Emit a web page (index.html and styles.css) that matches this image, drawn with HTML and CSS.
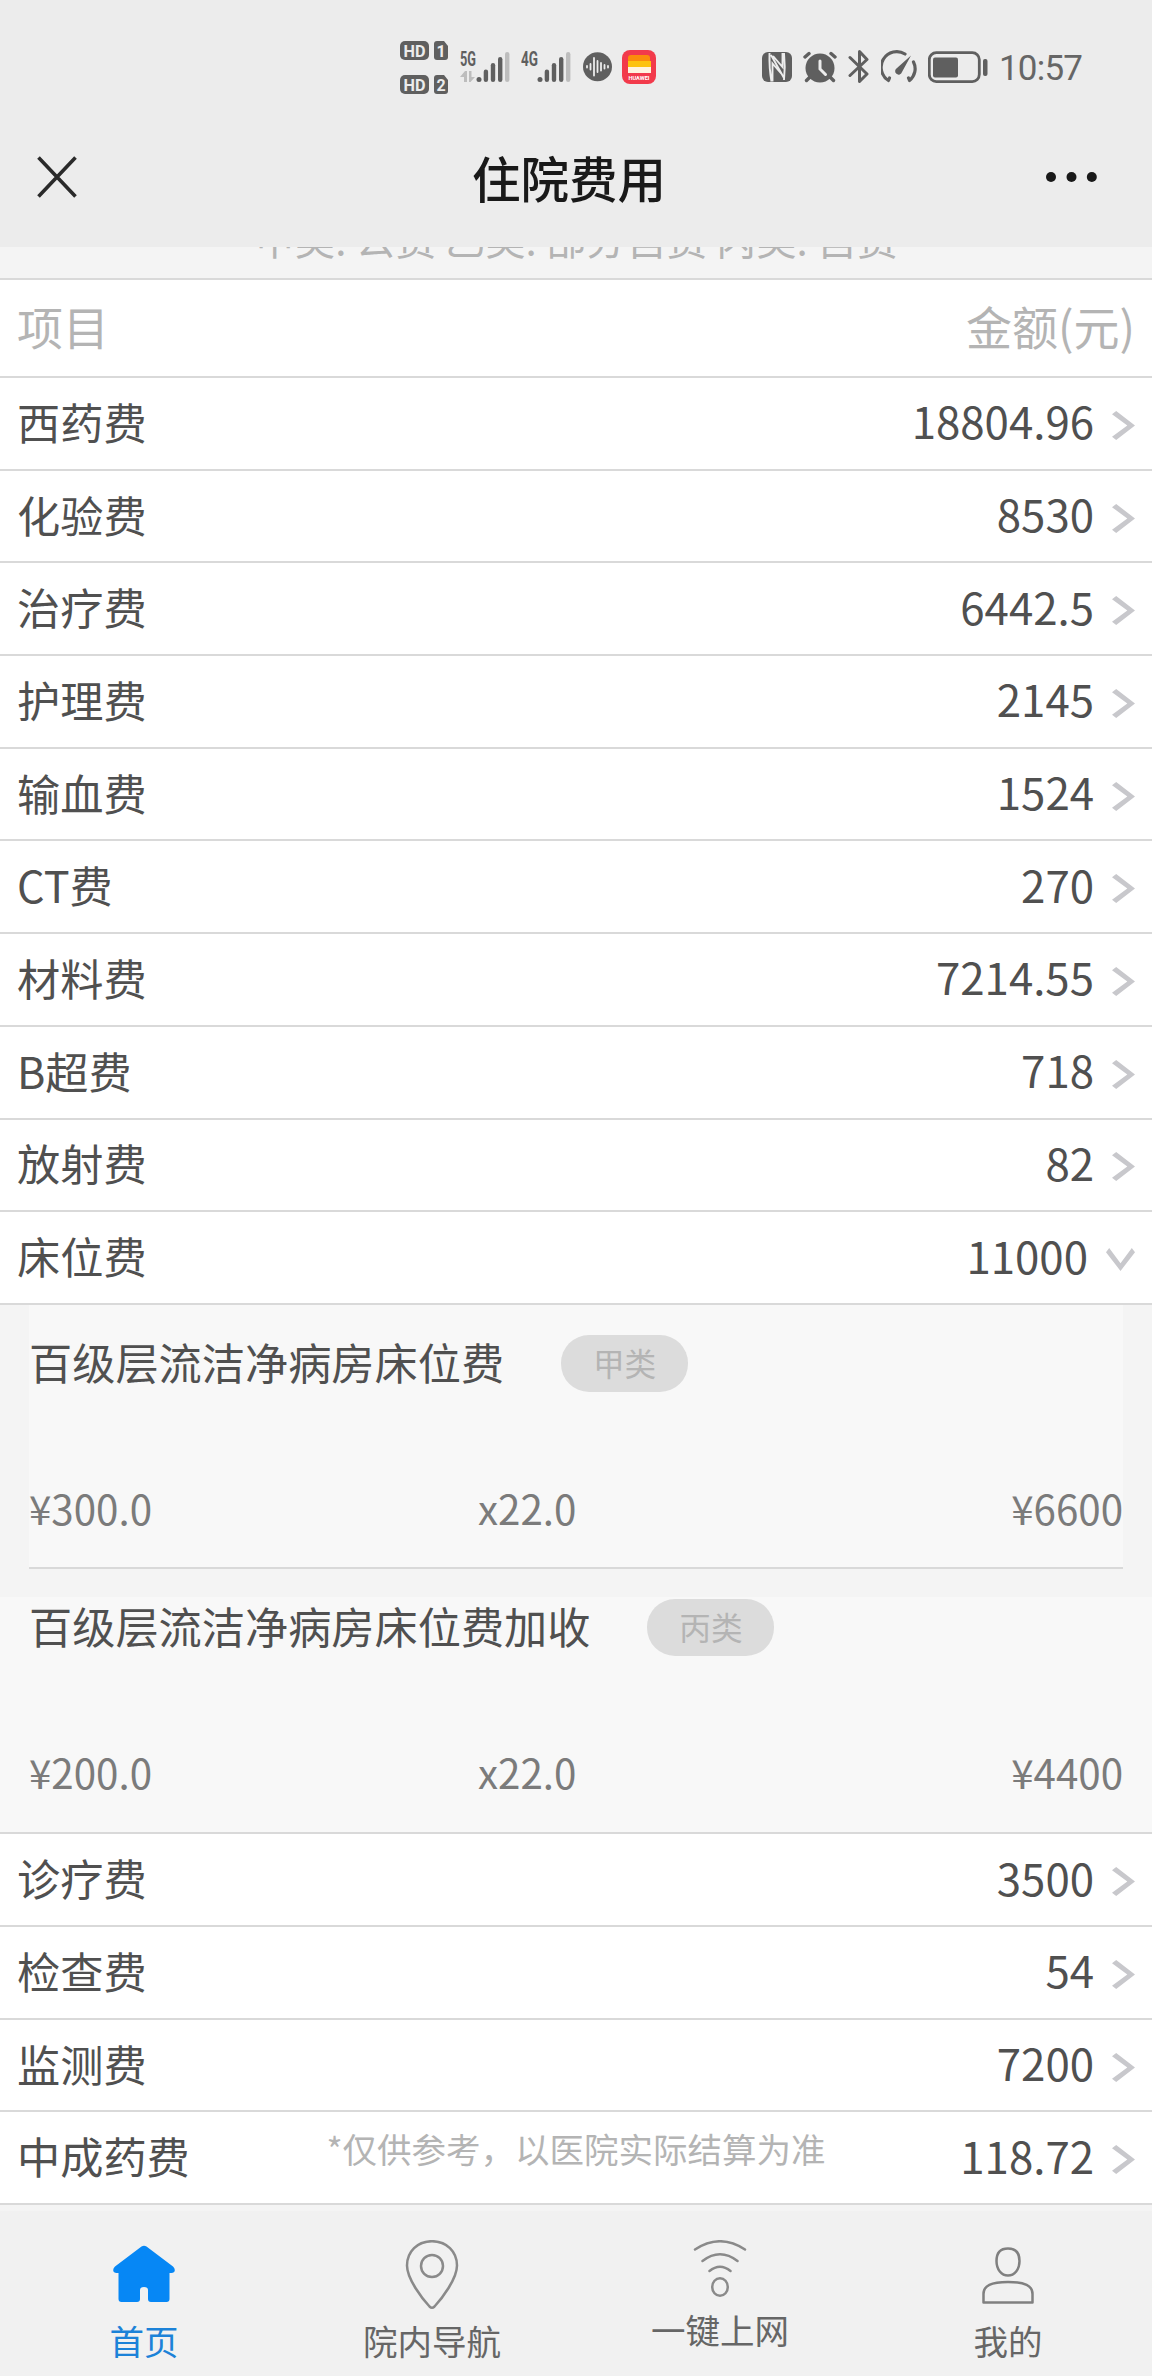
FILE: index.html
```html
<!DOCTYPE html>
<html lang="zh-CN">
<head>
    <meta charset="UTF-8">
    <meta name="viewport" content="width=device-width, initial-scale=1.0">
    <title>住院费用</title>
    <link rel="stylesheet" href="styles.css">
</head>
<body>
    <div class="page">
        <header class="top">
            <!-- 状态栏 -->
            <div class="status-bar">
                <svg class="hd-icon" width="48" height="56" viewBox="0 0 48 56">
                    <g fill="#5f5f5f">
                        <rect x="0" y="1" width="29" height="19" rx="5"/>
                        <path d="M37 1h7l4 5v11q0 3-3 3h-8q-3 0-3-3v-13q0-3 3-3z"/>
                        <rect x="0" y="35" width="29" height="19" rx="5"/>
                        <path d="M37 35h7l4 5v11q0 3-3 3h-8q-3 0-3-3v-13q0-3 3-3z"/>
                    </g>
                    <g class="badge-text">
                        <text x="14.5" y="16.5" textLength="22" lengthAdjust="spacingAndGlyphs">HD</text>
                        <text x="41" y="16.5">1</text>
                        <text x="14.5" y="50.5" textLength="22" lengthAdjust="spacingAndGlyphs">HD</text>
                        <text x="41" y="50.5">2</text>
                    </g>
                </svg>
                <svg class="signal-5g" width="50" height="56" viewBox="0 0 50 56">
                    <text class="net-text" x="0" y="25.5" textLength="16" lengthAdjust="spacingAndGlyphs">5G</text>
                    <g fill="#bdbdbd">
                        <path d="M0 37l5-6h2v11H4v-5z"/>
                        <path d="M9 31h2.500v6H15l-4.500 5H9z"/>
                        <rect x="45" y="12" width="4.400" height="30" rx="2.200"/>
                    </g>
                    <g fill="#5f5f5f">
                        <circle cx="19" cy="39.500" r="2.500"/>
                        <rect x="23.700" y="29.500" width="4.400" height="12.500" rx="2.200"/>
                        <rect x="30.800" y="23" width="4.400" height="19" rx="2.200"/>
                        <rect x="38" y="17" width="4.400" height="25" rx="2.200"/>
                    </g>
                </svg>
                <svg class="signal-4g" width="50" height="56" viewBox="0 0 50 56">
                    <text class="net-text" x="0" y="25.5" textLength="17" lengthAdjust="spacingAndGlyphs">4G</text>
                    <rect x="45" y="12" width="4.400" height="30" rx="2.200" fill="#bdbdbd"/>
                    <g fill="#5f5f5f">
                        <circle cx="19" cy="39.500" r="2.500"/>
                        <rect x="23.700" y="29.500" width="4.400" height="12.500" rx="2.200"/>
                        <rect x="30.800" y="23" width="4.400" height="19" rx="2.200"/>
                        <rect x="38" y="17" width="4.400" height="25" rx="2.200"/>
                    </g>
                </svg>
                <svg class="voice-icon" width="29" height="56" viewBox="0 0 29 56">
                    <circle cx="14.500" cy="26.700" r="14.500" fill="#5f5f5f"/>
                    <path d="M4 26v1.500M7.500 24v5.500M11 18v17.500M14.500 21v11M18 23v7.500M21.500 25v3.500M25 26v1.500" stroke="#ececec" stroke-width="1.800" stroke-linecap="round"/>
                </svg>
                <svg class="wallet-icon" width="34" height="56" viewBox="0 0 34 56">
                    <rect x="0" y="10" width="34" height="34" rx="8" fill="#f23a4b"/>
                    <path d="M6 18q0-3 3-3h16q3 0 3 3v3H6z" fill="#fb8c0c"/>
                    <path d="M6 21h23v6H6z" fill="#fdc20f"/>
                    <path d="M6 27h23v6H6z" fill="#fff3df"/>
                    <text class="wallet-text" x="17" y="39.5" textLength="21" lengthAdjust="spacingAndGlyphs">HUAWEI</text>
                </svg>

                <svg class="nfc-icon" width="30" height="56" viewBox="0 0 30 56">
                    <rect x="0" y="12" width="30" height="30" rx="6" fill="#5f5f5f"/>
                    <path d="M7.500 13Q7 28 9.500 41.500M9 15l13 23M10.500 41.500V23.500l10 11.500M11 16l9.500 11V13M22 13q1.500 14 0 27" fill="none" stroke="#ececec" stroke-width="1.900"/>
                </svg>
                <svg class="alarm-icon" width="34" height="56" viewBox="0 0 34 56">
                    <g stroke="#5f5f5f" stroke-linecap="round" stroke-width="3.400">
                        <path d="M2 17l4-3.500M32 17l-4-3.500M7 37l-3.500 3.500M27 37l3.500 3.500"/>
                    </g>
                    <circle cx="17" cy="28" r="14.500" fill="#5f5f5f"/>
                    <path d="M17 21v8l5.500 5.500" fill="none" stroke="#ececec" stroke-width="3" stroke-linecap="round"/>
                </svg>
                <svg class="bluetooth-icon" width="22" height="56" viewBox="0 0 22 56">
                    <path d="M2 17.500l17 16.500-7.500 7.500V11.500L19 19.500 2 35.500" fill="none" stroke="#5f5f5f" stroke-width="3" stroke-linecap="round" stroke-linejoin="round"/>
                </svg>
                <svg class="gauge-icon" width="36" height="56" viewBox="0 0 36 56">
                    <path d="M8.500 38l-1 2.500A15 15 0 0 1 24 14M32.500 22A15 15 0 0 1 28.500 40.500l-1-2.500" fill="none" stroke="#5f5f5f" stroke-width="3.200" stroke-linecap="round" stroke-linejoin="round"/>
                    <path d="M30 15.500L21 32a3.500 3.500 0 1 1-5-4z" fill="#5f5f5f"/>
                </svg>
                <svg class="battery-icon" width="60" height="56" viewBox="0 0 60 56">
                    <rect x="1.300" y="12.600" width="50" height="29" rx="7" fill="none" stroke="#5f5f5f" stroke-width="2.800"/>
                    <rect x="5" y="17.500" width="25" height="20" rx="2" fill="#5f5f5f"/>
                    <rect x="55" y="19" width="4.500" height="17" rx="2" fill="#5f5f5f"/>
                </svg>
                <span class="time">10:57</span>
            </div>

            <!-- 标题栏 -->
            <div class="nav-bar">
                <svg class="close-icon" width="40" height="44" viewBox="0 0 40 44">
                    <path d="M1.500 2.500l37 39M38.500 2.500l-37 39" stroke="#2a2a2a" stroke-width="3.600"/>
                </svg>
                <h1>住院费用</h1>
                <svg class="more-icon" width="51" height="10" viewBox="0 0 51 10">
                    <g fill="#191919">
                        <circle cx="5" cy="5" r="5"/>
                        <circle cx="25.500" cy="5" r="5"/>
                        <circle cx="45.800" cy="5" r="5"/>
                    </g>
                </svg>
            </div>
        </header>

        <div class="notice"><p>甲类: 公费 乙类: 部分自费 丙类: 自费</p></div>

        <main class="fee-list">
            <div class="fee-head"><span>项目</span><span>金额(元)</span></div>
            <div class="fee-row"><span class="name">西药费</span><span class="amount">18804.96</span><svg class="arrow" viewBox="0 0 23 29"><path d="M0 3.200L4.200 0 23 14.500 4.200 29 0 25.800 15.300 14.500z"/></svg></div>
            <div class="fee-row"><span class="name">化验费</span><span class="amount">8530</span><svg class="arrow" viewBox="0 0 23 29"><path d="M0 3.200L4.200 0 23 14.500 4.200 29 0 25.800 15.300 14.500z"/></svg></div>
            <div class="fee-row"><span class="name">治疗费</span><span class="amount">6442.5</span><svg class="arrow" viewBox="0 0 23 29"><path d="M0 3.200L4.200 0 23 14.500 4.200 29 0 25.800 15.300 14.500z"/></svg></div>
            <div class="fee-row"><span class="name">护理费</span><span class="amount">2145</span><svg class="arrow" viewBox="0 0 23 29"><path d="M0 3.200L4.200 0 23 14.500 4.200 29 0 25.800 15.300 14.500z"/></svg></div>
            <div class="fee-row"><span class="name">输血费</span><span class="amount">1524</span><svg class="arrow" viewBox="0 0 23 29"><path d="M0 3.200L4.200 0 23 14.500 4.200 29 0 25.800 15.300 14.500z"/></svg></div>
            <div class="fee-row"><span class="name">CT费</span><span class="amount">270</span><svg class="arrow" viewBox="0 0 23 29"><path d="M0 3.200L4.200 0 23 14.500 4.200 29 0 25.800 15.300 14.500z"/></svg></div>
            <div class="fee-row"><span class="name">材料费</span><span class="amount">7214.55</span><svg class="arrow" viewBox="0 0 23 29"><path d="M0 3.200L4.200 0 23 14.500 4.200 29 0 25.800 15.300 14.500z"/></svg></div>
            <div class="fee-row"><span class="name">B超费</span><span class="amount">718</span><svg class="arrow" viewBox="0 0 23 29"><path d="M0 3.200L4.200 0 23 14.500 4.200 29 0 25.800 15.300 14.500z"/></svg></div>
            <div class="fee-row"><span class="name">放射费</span><span class="amount">82</span><svg class="arrow" viewBox="0 0 23 29"><path d="M0 3.200L4.200 0 23 14.500 4.200 29 0 25.800 15.300 14.500z"/></svg></div>
            <div class="fee-row"><span class="name">床位费</span><span class="amount">11000</span><svg class="arrow-down" viewBox="0 0 29 23"><path d="M3.200 0L0 4.200 14.500 23 29 4.200 25.800 0 14.500 15.300z"/></svg></div>

            <!-- 床位费明细 -->
            <div class="detail">
                <div class="detail-item detail-first">
                    <div class="detail-title">百级层流洁净病房床位费<span class="tag">甲类</span></div>
                    <div class="detail-price"><span>¥300.0</span><span>x22.0</span><span class="total">¥6600</span></div>
                </div>
                <div class="detail-item detail-last">
                    <div class="detail-title">百级层流洁净病房床位费加收<span class="tag">丙类</span></div>
                    <div class="detail-price"><span>¥200.0</span><span>x22.0</span><span class="total">¥4400</span></div>
                </div>
            </div>

            <div class="fee-row"><span class="name">诊疗费</span><span class="amount">3500</span><svg class="arrow" viewBox="0 0 23 29"><path d="M0 3.200L4.200 0 23 14.500 4.200 29 0 25.800 15.300 14.500z"/></svg></div>
            <div class="fee-row"><span class="name">检查费</span><span class="amount">54</span><svg class="arrow" viewBox="0 0 23 29"><path d="M0 3.200L4.200 0 23 14.500 4.200 29 0 25.800 15.300 14.500z"/></svg></div>
            <div class="fee-row"><span class="name">监测费</span><span class="amount">7200</span><svg class="arrow" viewBox="0 0 23 29"><path d="M0 3.200L4.200 0 23 14.500 4.200 29 0 25.800 15.300 14.500z"/></svg></div>
            <div class="fee-row"><span class="name">中成药费</span><span class="amount">118.72</span><svg class="arrow" viewBox="0 0 23 29"><path d="M0 3.200L4.200 0 23 14.500 4.200 29 0 25.800 15.300 14.500z"/></svg></div>
        </main>

        <!-- 底部导航 -->
        <footer class="tab-bar">
            <p class="tip">*仅供参考，以医院实际结算为准</p>
            <a class="tab active">
                <svg width="64" height="70" viewBox="0 0 64 70">
                    <path d="M29.500 6.500Q32 5 34.500 6.500L61 26.500Q63.500 29 62.500 31.500 61.500 33 57.500 33V59Q57.500 62 54.500 62H39Q36 62 36 59V50Q36 47 32 47T28 50V59Q28 62 25 62H9.500Q6.500 62 6.500 59V33Q2.500 33 1.500 31.500 .500 29 3 26.500z" fill="#0687f5"/>
                </svg>
                <span>首页</span>
            </a>
            <a class="tab">
                <svg width="64" height="70" viewBox="0 0 64 70">
                    <g fill="none" stroke="#8a8a8a" stroke-width="2.500">
                        <path d="M32 1.200C17.500 1.200 7 11.500 7 25.500 7 39 22.500 59 29.500 66.500Q32 69 34.500 66.500C41.500 59 57 39 57 25.500 57 11.500 46.500 1.200 32 1.200z"/>
                        <circle cx="32" cy="26" r="11"/>
                    </g>
                </svg>
                <span>院内导航</span>
            </a>
            <a class="tab tab-wifi">
                <svg width="64" height="70" viewBox="0 0 64 70">
                    <g fill="none" stroke="#8a8a8a" stroke-width="2.500" stroke-linecap="round">
                        <path d="M7 9.500Q32-7 57 9.500M14.500 21Q32 7.500 49.500 21M21.500 31Q32 22.500 42.500 31"/>
                        <ellipse cx="32" cy="47" rx="7.800" ry="8.800"/>
                    </g>
                </svg>
                <span>一键上网</span>
            </a>
            <a class="tab">
                <svg width="64" height="70" viewBox="0 0 64 70">
                    <g fill="none" stroke="#808080" stroke-width="2.500" stroke-linejoin="round">
                        <path d="M32 8.500C24.500 8.500 20.500 13 20.500 21 20.500 29.500 25.500 35.500 32 35.500S43.500 29.500 43.500 21C43.500 13 39.500 8.500 32 8.500z"/>
                        <path d="M7.500 62.500V54C7.500 45.500 15 42 32 42S56.500 45.500 56.500 54V62.500z"/>
                    </g>
                </svg>
                <span>我的</span>
            </a>
        </footer>
    </div>
</body>
</html>
```

FILE: styles.css
```css
* {
    box-sizing: border-box;
}

body {
    margin: 0;
    background-color: #f4f4f4;
    font-family: "Noto Sans CJK SC", sans-serif;
    color: #505050;
}

.page {
    display: flex;
    flex-direction: column;
    height: 2376px;
    overflow: hidden;
}

.top {
    height: 247px;
    flex-shrink: 0;
    background-color: #ececec;
}

/* 状态栏 */
.status-bar {
    display: flex;
    height: 130px;
    padding: 40px 0 0 400px;
}

.status-bar svg {
    flex-shrink: 0;
}

.signal-5g {
    margin-left: 12px;
}

.signal-4g {
    margin-left: 11px;
}

.voice-icon {
    margin-left: 12px;
}

.wallet-icon {
    margin-left: 10px;
}

.nfc-icon {
    margin-left: 106px;
}

.alarm-icon {
    margin-left: 11px;
}

.bluetooth-icon,
.gauge-icon {
    margin-left: 11px;
}

.battery-icon {
    margin-left: 11px;
}

.badge-text {
    font: bold 16px Roboto, sans-serif;
    fill: #ececec;
    text-anchor: middle;
}

.net-text {
    font: bold 20px Roboto, sans-serif;
    fill: #5f5f5f;
}

.wallet-text {
    font: bold 6px Roboto, sans-serif;
    fill: #fff;
    text-anchor: middle;
}

.time {
    margin: 9px 0 0 11px;
    font: 35px/40px Roboto, sans-serif;
    color: #666;
    letter-spacing: -0.8px;
}

/* 标题栏 */
.nav-bar {
    display: flex;
    align-items: center;
    justify-content: space-between;
    height: 94px;
    padding: 0 55px 0 37px;
}

.nav-bar h1 {
    margin: 0 0 0 15px;
    font-size: 48.5px;
    font-weight: 500;
    line-height: 94px;
    color: #191919;
}

.notice {
    display: flex;
    flex-direction: column;
    justify-content: flex-end;
    height: 33px;
    flex-shrink: 0;
    overflow: hidden;
    border-bottom: 2px solid #d9d9d9;
}

.notice p {
    margin: 0 0 18px;
    font-size: 40.3px;
    line-height: 44px;
    text-align: center;
    color: #b4b4b4;
}

/* 费用列表 */
.fee-list {
    flex-shrink: 0;
}

.fee-head,
.fee-row {
    display: flex;
    align-items: center;
    background-color: #fff;
    border-bottom: 2px solid #d9d9d9;
    padding: 0 17px;
}

.fee-head {
    justify-content: space-between;
    height: 98px;
    padding-bottom: 6px;
    font-size: 46px;
    line-height: 90px;
    color: #b4b4b4;
}

.fee-row {
    height: 92.7px;
    font-size: 43.2px;
    line-height: 86px;
}

.name {
    flex: 1;
    padding-bottom: 5px;
}

.amount {
    padding-bottom: 6px;
    font-size: 43.8px;
}

.arrow {
    width: 23px;
    height: 29px;
    margin: 4px 0 0 18px;
    fill: #c8c8cc;
}

.arrow-down {
    width: 29px;
    height: 23px;
    margin: 4px 0 0 18px;
    fill: #c8c8cc;
}

/* 明细 */
.detail {
    border-bottom: 2px solid #d9d9d9;
}

.detail-item {
    background-color: #f8f8f8;
}

.detail-first {
    height: 264px;
    margin: 0 29px 28.5px;
    padding-top: 30px;
    border-bottom: 2px solid #d9d9d9;
}

.detail-last {
    height: 235px;
    padding: 2px 29px 0;
}

.detail-title {
    display: flex;
    height: 57px;
    font-size: 43.2px;
    line-height: 53px;
}

.tag {
    width: 127px;
    height: 57px;
    margin-left: 57px;
    border-radius: 28px;
    background-color: #dcdcdc;
    font-size: 31.7px;
    line-height: 55px;
    text-align: center;
    color: #b4b4b4;
}

.detail-price {
    display: grid;
    grid-template-columns: 449px 1fr 1fr;
    margin-top: 90px;
    font-size: 40.3px;
    line-height: 52px;
    color: #7b7b7b;
}

.total {
    text-align: right;
}

/* 底部导航 */
.tab-bar {
    position: relative;
    display: flex;
    flex: 1;
    margin-top: 6px;
    background-color: #f1f1f1;
}

.tip {
    position: absolute;
    left: 0;
    top: -88px;
    width: 100%;
    margin: 0;
    font-size: 34.5px;
    line-height: 50px;
    text-align: center;
    color: #b4b4b4;
}

.tab {
    display: flex;
    flex: 1;
    flex-direction: column;
    align-items: center;
    padding-top: 29px;
    font-size: 34.5px;
    line-height: 44px;
    color: #666;
}

.tab span {
    margin-top: 8px;
}

.tab-wifi span {
    margin-top: -3px;
}

.active {
    color: #1c82d8;
}
```
